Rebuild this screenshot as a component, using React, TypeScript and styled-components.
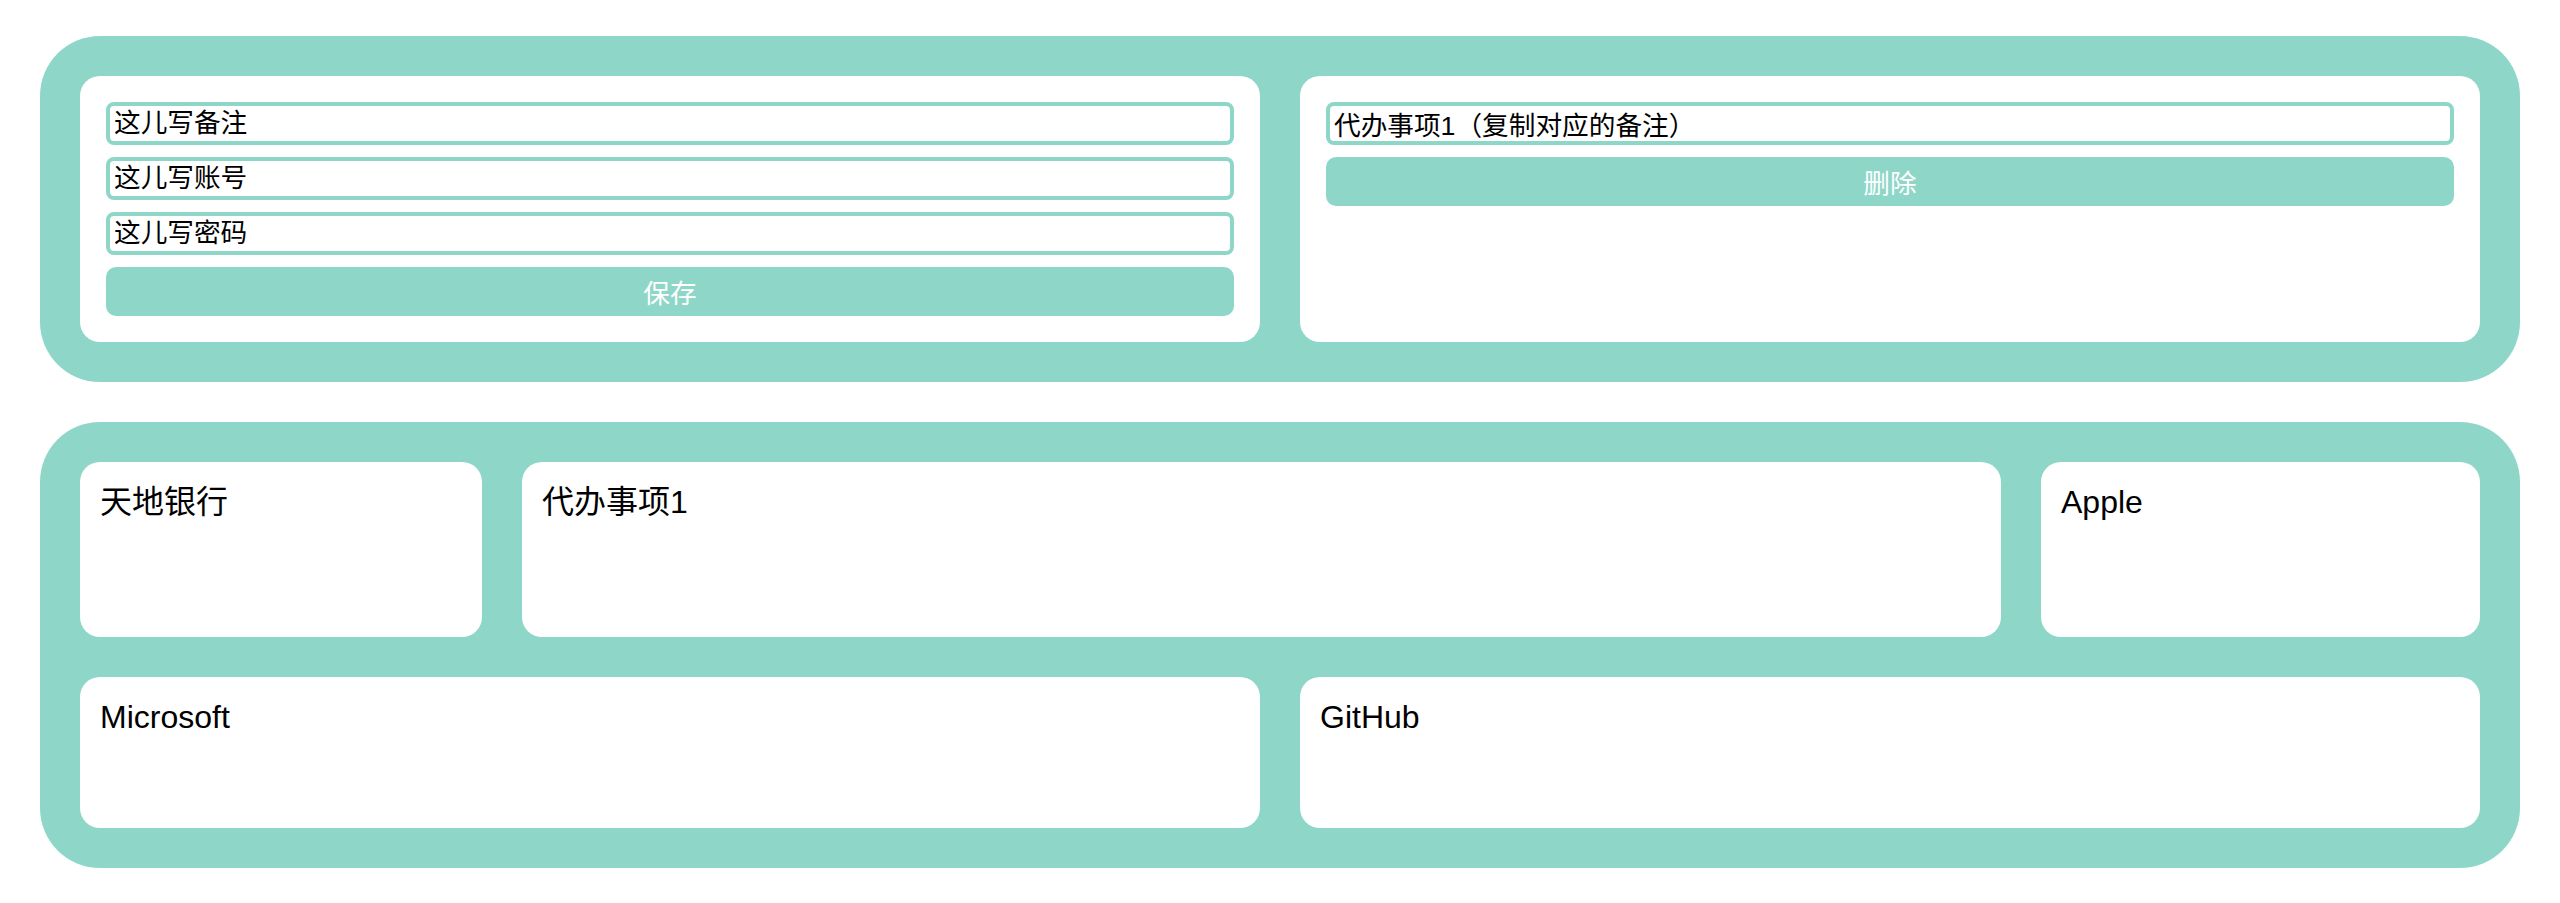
import React from 'react';
import styled, { createGlobalStyle } from 'styled-components';

const teal = '#8ed7c8';

const GlobalStyle = createGlobalStyle`
  body {
    margin: 0;
    background: #fff;
    font-family: "Liberation Sans", "Noto Sans CJK SC", sans-serif;
    color: #000;
  }
`

const Page = styled.div`
  display: flex;
  flex-direction: column;
  gap: 40px;
  padding: 36px 40px;
`

const Panel = styled.section`
  display: flex;
  flex-direction: column;
  gap: 40px;
  padding: 40px;
  border-radius: 60px;
  background: ${teal};
`

const Row = styled.div<{ $cols: string }>`
  display: grid;
  grid-template-columns: ${p => p.$cols};
  gap: 40px;
`

const FormCard = styled.div`
  display: flex;
  flex-direction: column;
  gap: 12px;
  padding: 26px;
  border-radius: 20px;
  background: #fff;
`

const Field = styled.input`
  box-sizing: border-box;
  width: 100%;
  height: 43px;
  padding: 0 4px;
  border: 4px solid ${teal};
  border-radius: 8px;
  outline: none;
  font-family: "Liberation Sans", "Noto Sans CJK SC", sans-serif;
  font-size: 26.67px;
  line-height: 31px;
  color: #000;
  background: #fff;

  &::placeholder {
    color: #000;
  }
`

const ActionButton = styled.button`
  width: 100%;
  height: 49px;
  border: none;
  border-radius: 10px;
  background: ${teal};
  font-family: "Liberation Sans", "Noto Sans CJK SC", sans-serif;
  font-size: 26.67px;
  color: #fff;
  cursor: pointer;
`

const EntryCard = styled.div<{ $height: number }>`
  box-sizing: border-box;
  height: ${p => p.$height}px;
  padding: 20px;
  border-radius: 20px;
  background: #fff;
  font-size: 32px;
  line-height: 40px;
`

const App: React.FC = () => {
  return (
    <>
      <GlobalStyle />
      <Page>
        <Panel>
          <Row $cols="1fr 1fr">
            <FormCard>
              <Field placeholder="这儿写备注" />
              <Field placeholder="这儿写账号" />
              <Field placeholder="这儿写密码" />
              <ActionButton>保存</ActionButton>
            </FormCard>
            <FormCard>
              <Field defaultValue="代办事项1（复制对应的备注）" />
              <ActionButton>删除</ActionButton>
            </FormCard>
          </Row>
        </Panel>
        <Panel>
          <Row $cols="402px 1fr 439px">
            <EntryCard $height={175}>天地银行</EntryCard>
            <EntryCard $height={175}>代办事项1</EntryCard>
            <EntryCard $height={175}>Apple</EntryCard>
          </Row>
          <Row $cols="1fr 1fr">
            <EntryCard $height={151}>Microsoft</EntryCard>
            <EntryCard $height={151}>GitHub</EntryCard>
          </Row>
        </Panel>
      </Page>
    </>
  )
}

export default App;
